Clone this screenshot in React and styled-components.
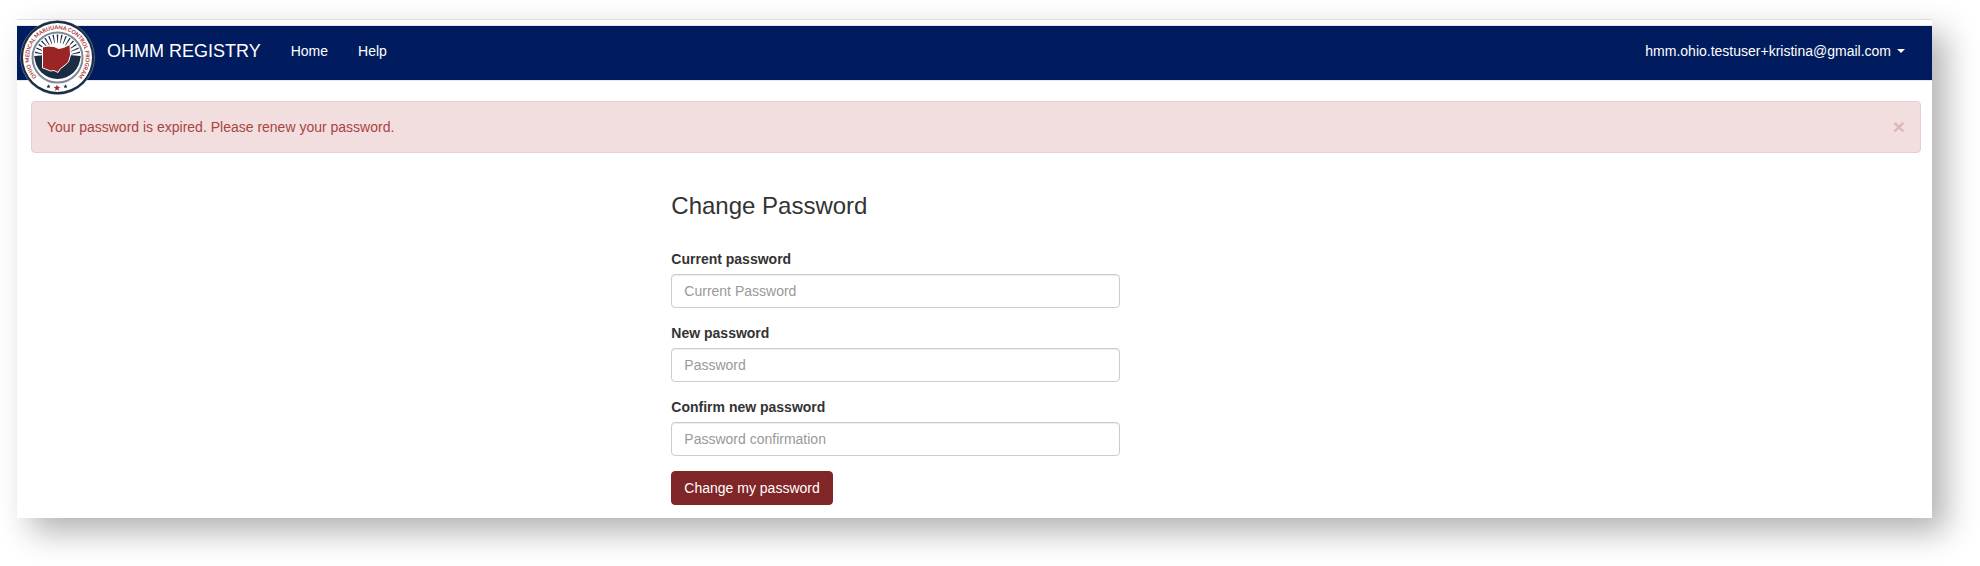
import React, { useState } from 'react';
import styled, { createGlobalStyle } from 'styled-components';

const GlobalStyle = createGlobalStyle`
  * {
    box-sizing: border-box;
  }

  body {
    margin: 0;
    background-color: #ffffff;
    color: #333333;
    font-family: 'Liberation Sans', Arial, Helvetica, sans-serif;
    font-size: 14px;
    line-height: 20px;
  }
`;

const Page = styled.div`
  padding: 19px 48px 48px 17px;
`;

const Window = styled.div`
  padding-top: 5px;
  padding-bottom: 13px;
  background-color: #ffffff;
  border-top: 1px solid #dddddd;
  box-shadow: 14px 14px 30px rgba(0, 0, 0, 0.3);
`;

const Navbar = styled.nav`
  position: relative;
  display: flex;
  justify-content: space-between;
  align-items: flex-start;
  min-height: 56px;
  padding-left: 75px;
  background-color: #001c5e;
  border-top: 1px solid #e7e7e7;
  border-bottom: 1px solid #e7e7e7;
`;

const NavGroup = styled.div`
  display: flex;
`;

const LogoLink = styled.a`
  position: absolute;
  top: -6px;
  left: 3px;
  display: block;
  width: 75px;
  height: 75px;

  svg {
    display: block;
  }
`;

const Brand = styled.a`
  padding: 15px;
  color: #ffffff;
  font-size: 18px;
  line-height: 20px;
  text-decoration: none;
`;

const NavLink = styled.a`
  display: flex;
  align-items: center;
  padding: 15px;
  color: #ffffff;
  line-height: 20px;
  text-decoration: none;
`;

const UserButton = styled.button`
  display: flex;
  align-items: center;
  gap: 6px;
  padding: 15px 27px 15px 15px;
  color: #ffffff;
  background: none;
  border: none;
  font: inherit;
  cursor: pointer;
`;

const Caret = styled.span`
  border-top: 4px solid #ffffff;
  border-right: 4px solid transparent;
  border-left: 4px solid transparent;
`;

const Alert = styled.div`
  display: flex;
  justify-content: space-between;
  align-items: center;
  margin: 20px 11px 0 14px;
  padding: 15px;
  color: #a94442;
  background-color: #f2dede;
  border: 1px solid #ebccd1;
  border-radius: 4px;
`;

const CloseButton = styled.button`
  height: 20px;
  padding: 0;
  color: #a94442;
  background: none;
  border: none;
  font-family: inherit;
  font-size: 21px;
  font-weight: bold;
  line-height: 16px;
  opacity: 0.25;
  cursor: pointer;
`;

const Form = styled.form`
  width: 25%;
  margin-left: calc(100% / 3);
  padding: 40px 14px 0 16px;
`;

const Title = styled.h3`
  margin: 0 0 30px;
  font-size: 24px;
  font-weight: 500;
  line-height: 26px;
`;

const FormGroup = styled.div`
  margin-bottom: 15px;
`;

const Label = styled.label`
  display: block;
  margin-bottom: 5px;
  font-weight: bold;
`;

const Input = styled.input`
  display: block;
  width: 100%;
  height: 34px;
  padding: 6px 12px;
  color: #555555;
  background-color: #ffffff;
  border: 1px solid #cccccc;
  border-radius: 4px;
  box-shadow: inset 0 1px 1px rgba(0, 0, 0, 0.075);
  font: inherit;

  &::placeholder {
    color: #999999;
  }
`;

const SubmitButton = styled.button`
  padding: 6px 12px;
  color: #ffffff;
  background-color: #802528;
  border: 1px solid #802528;
  border-radius: 4px;
  font: inherit;
  cursor: pointer;
`;

const RAY_ANGLES = Array.from({ length: 17 }, (_, i) => i * 11 - 88);

const STAR = 'M0 -10L2.6 -3.4L9.5 -3.1L4.1 1.3L5.9 8.1L0 4.3L-5.9 8.1L-4.1 1.3L-9.5 -3.1L-2.6 -3.4Z';

// 프로그램 인장 로고
function Seal() {
  return (
    <svg width="75" height="75" viewBox="0 0 150 150" role="img" aria-label="Ohio Medical Marijuana Control Program">
      <defs>
        <path id="sealText" d="M46.7 123.9A56.5 56.5 0 1 1 103.3 123.9" />
      </defs>
      <circle cx="75" cy="75" r="74.5" fill="#7d8ca3" />
      <circle cx="75" cy="75" r="73.5" fill="#1c2c42" />
      <circle cx="75" cy="75" r="69" fill="#ffffff" />
      <circle cx="75" cy="75" r="50" fill="#ffffff" stroke="#7e8896" strokeWidth="4" />
      {RAY_ANGLES.map((angle) => (
        <path key={angle} d="M74.5 46L73.5 29H76.5L75.5 46Z" fill="#1c2c42" transform={`rotate(${angle} 75 75)`} />
      ))}
      <path d="M29 72Q75 66 121 72A46 46 0 1 1 29 72Z" fill="#1c2c42" />
      <path
        d="M45 54L56 52L68 53L77 57L87 55L100 49L101 70L97 84L88 92L81 97L76 105L68 101L61 102L51 98L45 96Z"
        fill="#9b2525"
        stroke="#ffffff"
        strokeWidth="2"
      />
      <text fill="#a83236" fontFamily="Lato, sans-serif" fontSize="11" fontWeight="bold">
        <textPath href="#sealText" startOffset="50%" textAnchor="middle">
          OHIO MEDICAL MARIJUANA CONTROL PROGRAM
        </textPath>
      </text>
      <path d={STAR} fill="#1c2c42" transform="translate(57 133) scale(0.45)" />
      <path d={STAR} fill="#a82428" transform="translate(74 136) scale(0.68)" />
      <path d={STAR} fill="#1c2c42" transform="translate(91 133) scale(0.45)" />
    </svg>
  );
}

const fields = [
  { id: 'current_password', label: 'Current password', placeholder: 'Current Password' },
  { id: 'password', label: 'New password', placeholder: 'Password' },
  { id: 'password_confirmation', label: 'Confirm new password', placeholder: 'Password confirmation' },
];

function App() {
  const [values, setValues] = useState({});
  const [showAlert, setShowAlert] = useState(true);

  const handleChange = (e) => {
    setValues({ ...values, [e.target.name]: e.target.value });
  };

  return (
    <>
      <GlobalStyle />
      <Page>
        <Window>
          <Navbar>
            <NavGroup>
              <LogoLink href="#home">
                <Seal />
              </LogoLink>
              <Brand href="#home">OHMM REGISTRY</Brand>
              <NavLink href="#home">Home</NavLink>
              <NavLink href="#help">Help</NavLink>
            </NavGroup>
            <UserButton type="button" aria-haspopup="true">
              hmm.ohio.testuser+kristina@gmail.com
              <Caret />
            </UserButton>
          </Navbar>
          {showAlert && (
            <Alert role="alert">
              Your password is expired. Please renew your password.
              <CloseButton type="button" aria-label="Close" onClick={() => setShowAlert(false)}>
                ×
              </CloseButton>
            </Alert>
          )}
          <Form onSubmit={(e) => e.preventDefault()}>
            <Title>Change Password</Title>
            {fields.map((field) => (
              <FormGroup key={field.id}>
                <Label htmlFor={field.id}>{field.label}</Label>
                <Input
                  type="password"
                  id={field.id}
                  name={field.id}
                  placeholder={field.placeholder}
                  value={values[field.id] || ''}
                  onChange={handleChange}
                />
              </FormGroup>
            ))}
            <SubmitButton type="submit">Change my password</SubmitButton>
          </Form>
        </Window>
      </Page>
    </>
  );
}

export default App;
